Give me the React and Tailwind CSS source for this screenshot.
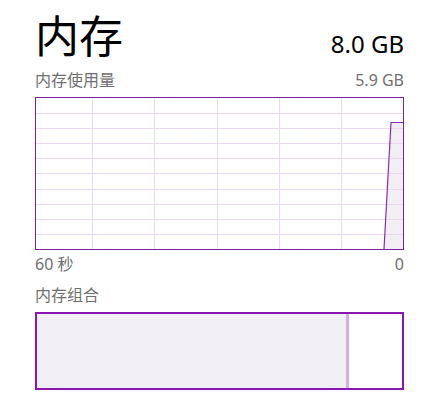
import React from 'react';

const FONT = { fontFamily: '"Noto Sans", "Noto Sans CJK SC", sans-serif' };

const hLines = [15, 30, 45, 60, 75, 91, 106, 121, 136];
const vLines = [56, 118, 181, 243, 305];

const UsageChart = () => (
  <div className="mt-[7px] h-[153px] w-[369px] border border-[#7a22a0] bg-white">
    <svg width="367" height="151" className="block">
      <polygon points="348,151 355,24 367,24 367,151" fill="#f2eff4" />
      {hLines.map((y) => (
        <line key={'h' + y} x1="0" x2="367" y1={y + 0.5} y2={y + 0.5} stroke="#ead9f0" strokeWidth="1" />
      ))}
      {vLines.map((x) => (
        <line key={'v' + x} x1={x + 0.5} x2={x + 0.5} y1="0" y2="151" stroke="#ead9f0" strokeWidth="1" />
      ))}
      <polyline points="348,151 355,24.5 367,24.5" fill="none" stroke="#8b2bb5" strokeWidth="1.2" />
    </svg>
  </div>
);

export default function App() {
  return (
    <div className="h-[404px] w-[432px] bg-white" style={FONT}>
      <div className="ml-[35px] w-[369px] pt-[6px]">
        <div className="flex items-baseline justify-between">
          <span className="text-[44px] leading-[60px] text-black">内存</span>
          <span className="text-[24px] leading-none text-black">8.0 GB</span>
        </div>
        <div className="mt-[4px] flex justify-between text-[16px] leading-[20px] text-[#707070]">
          <span>内存使用量</span>
          <span>5.9 GB</span>
        </div>
        <UsageChart />
        <div className="mt-[4px] flex justify-between text-[16px] leading-[20px] text-[#707070]">
          <span>60 秒</span>
          <span>0</span>
        </div>
        <div className="mt-[11px] text-[16px] leading-[20px] text-[#707070]">内存组合</div>
        <div className="mt-[7px] flex h-[78px] w-[369px] border-2 border-[#8a17b0] bg-white">
          <div className="w-[309px] bg-[#f2eff4]" />
          <div className="w-[3px] bg-[#d3b1dd]" />
          <div className="flex-1" />
        </div>
      </div>
    </div>
  );
}
